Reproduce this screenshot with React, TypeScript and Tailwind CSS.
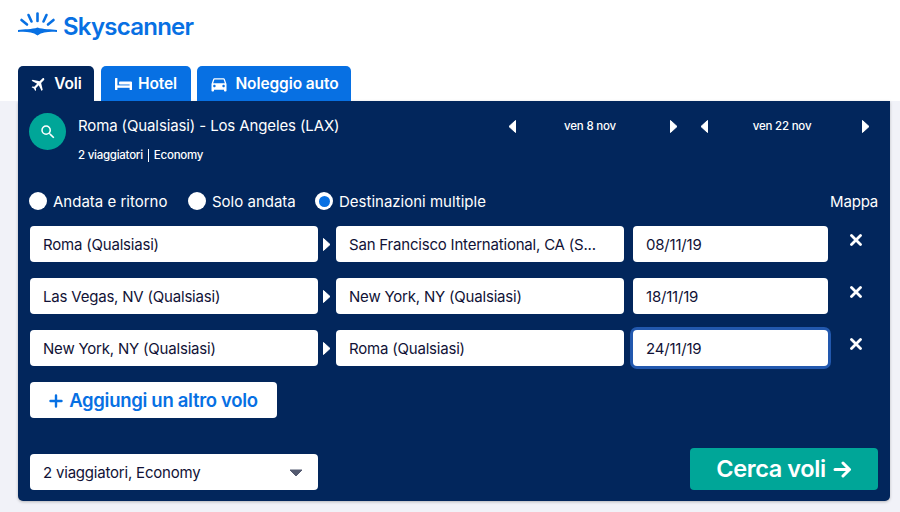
// App.tsx
import React from "react";
import { MdFlight, MdDirectionsCar, MdSearch } from "react-icons/md";

const font = { fontFamily: "Inter, 'Noto Sans', sans-serif" };

function Logo() {
  return (
    <svg width="39" height="26" viewBox="0 0 39 26" className="shrink-0 -mt-[4px]">
      <g stroke="#0770e3" strokeWidth="2.6" strokeLinecap="round" fill="none">
        <path d="M19.5 1.5 L19.5 9" />
        <path d="M10.5 3 L13.5 9.5" />
        <path d="M28.5 3 L25.5 9.5" />
        <path d="M3.5 8 L9 12.5" />
        <path d="M35.5 8 L30 12.5" />
      </g>
      <path d="M0 18 C6 17 14 17.5 19.5 15.5 C25 17.5 33 17 39 18 L39 20 C32 19.6 25 19.6 19.5 23.5 C14 19.6 7 19.6 0 20 Z" fill="#0770e3" />
    </svg>
  );
}

function BedIcon() {
  return (
    <svg width="17" height="12" viewBox="0 0 17 12" fill="white">
      <rect x="0" y="0" width="2.4" height="12" rx="0.6" />
      <rect x="14.6" y="4" width="2.4" height="8" rx="0.6" />
      <rect x="0" y="7.4" width="17" height="2.4" />
      <rect x="4" y="3.4" width="13" height="3" rx="1" />
    </svg>
  );
}

function Tab({ icon, label, active, className }: { icon: React.ReactNode; label: string; active?: boolean; className: string }) {
  return (
    <div
      className={`h-[35px] flex items-center justify-center gap-[6px] rounded-t-[5px] text-white text-[15.5px] font-semibold tracking-[-0.1px] ${
        active ? "bg-[#02265c]" : "bg-[#0770e3]"
      } ${className}`}
    >
      {icon}
      {label}
    </div>
  );
}

function Triangle({ dir }: { dir: "left" | "right" }) {
  return (
    <svg width="8" height="13" viewBox="0 0 8 13" className="shrink-0">
      <path d={dir === "left" ? "M7.5 0.5 V12.5 L1 6.5 Z" : "M0.5 0.5 V12.5 L7 6.5 Z"} fill="white" stroke="white" strokeLinejoin="round" />
    </svg>
  );
}

function DateNav({ label, className }: { label: string; className: string }) {
  return (
    <div className={`flex items-center justify-between ${className}`}>
      <Triangle dir="left" />
      <span className="text-[11.5px] font-medium text-white tracking-[-0.2px] mr-[6px] mt-[2px]">{label}</span>
      <Triangle dir="right" />
    </div>
  );
}

function Radio({ label, checked, className }: { label: string; checked?: boolean; className: string }) {
  return (
    <div className={`flex items-center gap-[6px] ${className}`}>
      <span className="w-[18px] h-[18px] rounded-full bg-white flex items-center justify-center shrink-0 -ml-px">
        {checked && <span className="w-[11px] h-[11px] rounded-full bg-[#0770e3]" />}
      </span>
      <span className="text-white text-[15px] tracking-[0px] whitespace-nowrap pt-[2px]">{label}</span>
    </div>
  );
}

function Field({ value, className = "w-[288px]", focused }: { value: string; className?: string; focused?: boolean }) {
  return (
    <div
      className={`h-9 bg-white rounded-[4px] flex items-center px-[13px] pt-[2px] text-[15px] text-[#111236] tracking-[-0.2px] whitespace-nowrap overflow-hidden ${
        focused ? "ring-[3px] ring-[#2258ae]" : ""
      } ${className}`}
    >
      {value}
    </div>
  );
}

function Row({ from, to, date, focused }: { from: string; to: string; date: string; focused?: boolean }) {
  return (
    <div className="flex items-center">
      <Field value={from} />
      <div className="w-[18px] flex justify-center">
        <Triangle dir="right" />
      </div>
      <Field value={to} />
      <Field value={date} className="w-[195px] ml-[9px]" focused={focused} />
      <svg width="12" height="12" viewBox="0 0 12 12" className="ml-[22px] -mt-[8px]">
        <path d="M1.5 1.5 L10.5 10.5 M10.5 1.5 L1.5 10.5" stroke="white" strokeWidth="2.8" strokeLinecap="round" />
      </svg>
    </div>
  );
}

export default function App() {
  return (
    <div className="w-[900px] h-[512px] overflow-hidden bg-[#f1f2f8]" style={font}>
      <div className="bg-white h-[101px] pl-[18px] flex flex-col justify-between">
        <div className="flex items-center gap-[6px] pt-[11px]">
          <Logo />
          <span className="text-[#0770e3] text-[24px] font-semibold tracking-[-0.75px] leading-[32px]">Skyscanner</span>
        </div>
        <div className="flex">
          <Tab active className="w-[76px]" label="Voli" icon={<MdFlight size={18} className="rotate-45" />} />
          <Tab className="w-[90px] ml-[7px]" label="Hotel" icon={<BedIcon />} />
          <Tab className="w-[154px] ml-[6px]" label="Noleggio auto" icon={<MdDirectionsCar size={20} />} />
        </div>
      </div>

      <div className="ml-[18px] w-[872px] h-[400px] bg-[#02265c] rounded-b-[5px] shadow-[0_1px_3px_rgba(0,0,0,0.25)] px-3 pt-3">
        <div className="flex items-start h-[68px]">
          <div className="w-[37px] h-[37px] rounded-full bg-[#00a698] flex items-center justify-center shrink-0 -ml-px">
            <MdSearch size={18} className="text-white" />
          </div>
          <div className="ml-[12px] text-white">
            <div className="text-[15px] leading-[26px] tracking-[-0.12px]">Roma (Qualsiasi) - Los Angeles (LAX)</div>
            <div className="flex items-center text-[11.5px] font-medium tracking-[-0.25px] mt-[8px] leading-[16px]">
              <span>2 viaggiatori</span>
              <span className="w-px h-[13px] bg-white mx-[5px]" />
              <span>Economy</span>
            </div>
          </div>
          <DateNav label="ven 8 nov" className="w-[170px] ml-[auto] mr-[22px] h-[26px]" />
          <DateNav label="ven 22 nov" className="w-[170px] mr-[8px] h-[26px]" />
        </div>

        <div className="flex items-center h-[24px] mt-[8px]">
          <Radio label="Andata e ritorno" className="w-[159px]" />
          <Radio label="Solo andata" className="w-[127px]" />
          <Radio label="Destinazioni multiple" checked className="flex-1" />
          <span className="text-white text-[15px] tracking-[-0.2px] pt-[2px]">Mappa</span>
        </div>

        <div className="flex flex-col gap-4 mt-[13px]">
          <Row from="Roma (Qualsiasi)" to="San Francisco International, CA (S..." date="08/11/19" />
          <Row from="Las Vegas, NV (Qualsiasi)" to="New York, NY (Qualsiasi)" date="18/11/19" />
          <Row from="New York, NY (Qualsiasi)" to="Roma (Qualsiasi)" date="24/11/19" focused />
        </div>

        <div className="w-[247px] h-9 bg-white rounded-[4px] mt-4 pt-[2px] flex items-center justify-center gap-[6px] text-[#0770e3] text-[18.5px] font-semibold tracking-[-0.3px]">
          <svg width="14" height="14" viewBox="0 0 14 14">
            <path d="M7 1.5 V12.5 M1.5 7 H12.5" stroke="#0770e3" strokeWidth="2.4" strokeLinecap="round" />
          </svg>
          Aggiungi un altro volo
        </div>

        <div className="flex items-end justify-between mt-[30px]">
          <div className="w-[288px] h-9 bg-white rounded-[4px] flex items-center justify-between pl-[13px] pr-[15px] pt-[2px] text-[15px] text-[#111236] tracking-[-0.2px]">
            2 viaggiatori, Economy
            <svg width="14" height="8" viewBox="0 0 14 8">
              <path d="M1 1 H13 L7 7 Z" fill="#545a70" stroke="#545a70" strokeLinejoin="round" />
            </svg>
          </div>
          <div className="w-[188px] h-[42px] bg-[#00a698] rounded-[4px] flex items-center justify-center gap-[7px] text-white text-[23.5px] font-semibold tracking-[-0.4px]">
            Cerca voli
            <svg width="19" height="17" viewBox="0 0 19 17">
              <path d="M2 8.5 H16.5 M10 2 L16.5 8.5 L10 15" stroke="white" strokeWidth="3" strokeLinecap="round" strokeLinejoin="round" fill="none" />
            </svg>
          </div>
        </div>
      </div>
    </div>
  );
}
